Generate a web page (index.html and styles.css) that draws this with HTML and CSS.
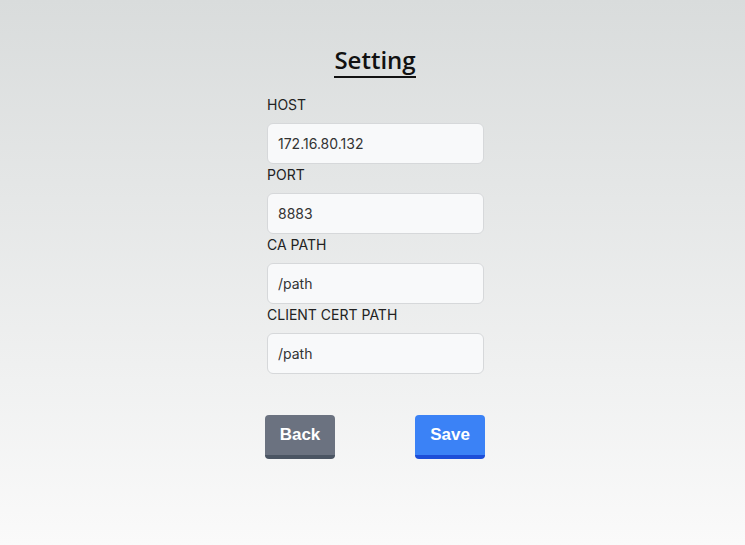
FILE: index.html
```html
<!DOCTYPE html>
<html lang="en">
<head>
<meta charset="utf-8">
<title>Setting</title>
<link rel="stylesheet" href="styles.css">
</head>
<body>
<main class="page">
  <h1 class="title">Setting</h1>
  <form class="form">
    <div class="field">
      <label class="label">HOST</label>
      <input class="input" type="text" value="172.16.80.132">
    </div>
    <div class="field">
      <label class="label">PORT</label>
      <input class="input" type="text" value="8883">
    </div>
    <div class="field">
      <label class="label">CA PATH</label>
      <input class="input" type="text" value="/path">
    </div>
    <div class="field">
      <label class="label">CLIENT CERT PATH</label>
      <input class="input" type="text" value="/path">
    </div>
    <div class="actions">
      <button type="button" class="btn btn-back">Back</button>
      <button type="button" class="btn btn-save">Save</button>
    </div>
  </form>
</main>
</body>
</html>
```
FILE: styles.css
```css
html, body {
  margin: 0;
  padding: 0;
}
body {
  width: 745px;
  height: 545px;
  background: linear-gradient(to bottom, #d9dcdc 0%, #fafafa 100%);
  font-family: Inter, "Noto Sans", sans-serif;
  overflow: hidden;
}
.page {
  display: flex;
  flex-direction: column;
  align-items: center;
  padding-top: 44px;
  padding-left: 5px;
}
.title {
  margin: 0;
  font-family: "Open Sans", "Noto Sans", sans-serif;
  font-weight: 600;
  font-size: 24px;
  line-height: 32px;
  color: #111;
  border-bottom: 2px solid #111;
  padding-bottom: 0;
}
.form {
  width: 220px;
  display: flex;
  flex-direction: column;
  margin-top: 17px;
}
.field {
  display: flex;
  flex-direction: column;
  padding: 0 2px 0 2px;
  height: 70px;
}
.label {
  font-size: 14px;
  line-height: 20px;
  color: #222;
  margin-bottom: 8px;
}
.input {
  box-sizing: border-box;
  width: 217px;
  height: 41px;
  margin: 0;
  padding: 0 10px;
  border: 1px solid #d6d8da;
  border-radius: 6px;
  background: #f8f9fa;
  font-family: Inter, "Noto Sans", sans-serif;
  font-size: 14px;
  color: #333;
  outline: none;
}
.actions {
  display: flex;
  justify-content: space-between;
  margin-top: 40px;
}
.btn {
  box-sizing: border-box;
  width: 70px;
  height: 44px;
  border: none;
  border-bottom: 4px solid;
  border-radius: 4px;
  color: #fff;
  font-family: "Liberation Sans", Arial, sans-serif;
  font-weight: 700;
  font-size: 17px;
  padding: 0;
  cursor: pointer;
}
.btn-back {
  background: #6b7280;
  border-bottom-color: #4b5563;
}
.btn-save {
  background: #3b82f6;
  border-bottom-color: #1d4ed8;
}
```
